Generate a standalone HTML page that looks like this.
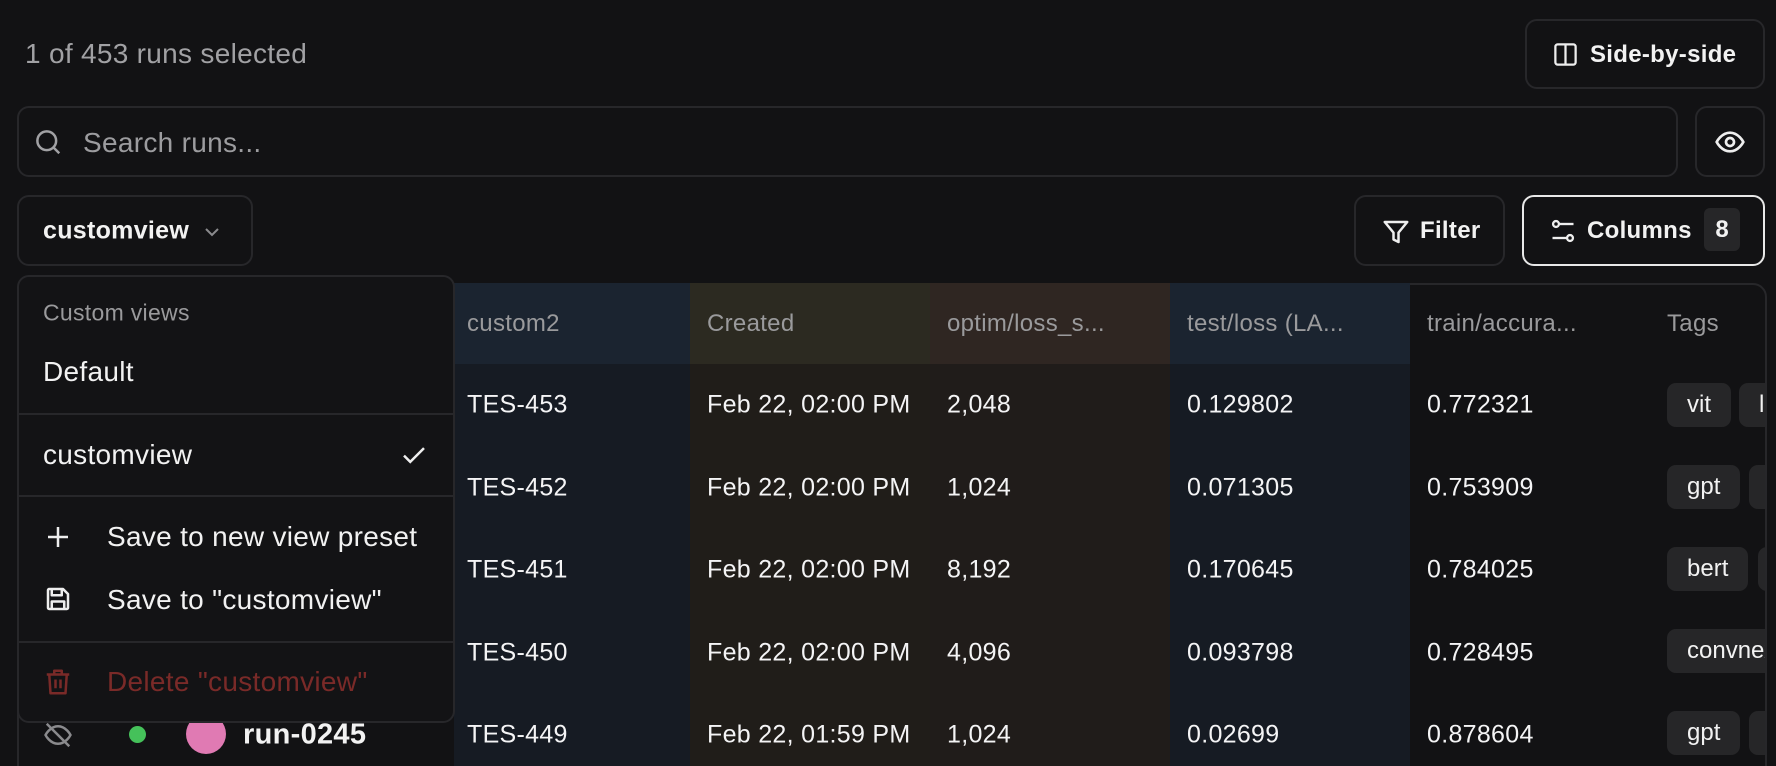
<!DOCTYPE html>
<html style="overflow:hidden;width:1776px;height:766px"><head><meta charset="utf-8"><style>
*{box-sizing:border-box;margin:0;padding:0}
body{width:1776px;height:766px;background:#121214;font-family:"Liberation Sans",sans-serif;color:#f2f2f2;position:relative;overflow:hidden}
#w{position:absolute;left:0;top:0;width:1776px;height:766px;overflow:hidden}
.a{position:absolute}
.box{position:absolute;border:2px solid #27272a;border-radius:12px}
.t{position:absolute;white-space:nowrap;transform:translateY(-50%);letter-spacing:0.3px}
.col{position:absolute;top:283px;height:483px}
.hd{position:absolute;top:0;left:0;right:0;height:81px}
.h{color:#9a9a9c;font-size:24px}
.c{font-size:25px;color:#f4f4f5}
.chip{position:absolute;height:44px;background:#262628;border-radius:9px;font-size:24px;line-height:44px;padding:0 20px;color:#f2f2f2}
svg{position:absolute}
</style></head><body><div id="w">
<div class="t" style="left:25px;top:54px;font-size:28px;color:#a1a1a4">1 of 453 runs selected</div>
<div class="box" style="left:1525px;top:19px;width:240px;height:70px"></div>
<svg style="left:1552px;top:41px" width="27" height="27" viewBox="0 0 24 24" fill="none" stroke="#eee" stroke-width="2"><rect x="3" y="3" width="18" height="18" rx="2"/><path d="M12 3v18"/></svg>
<div class="t" style="left:1590px;top:55px;font-size:24px;font-weight:bold">Side-by-side</div>

<div class="box" style="left:17px;top:106px;width:1661px;height:71px"></div>
<svg style="left:33px;top:127px" width="30" height="30" viewBox="0 0 24 24" fill="none" stroke="#a1a1a4" stroke-width="2"><circle cx="11" cy="11" r="7.5"/><path d="M16.5 16.5L21 21"/></svg>
<div class="t" style="left:83px;top:143px;font-size:28px;color:#9c9c9f">Search runs...</div>
<div class="box" style="left:1695px;top:106px;width:70px;height:71px"></div>
<svg style="left:1714px;top:126px" width="32" height="32" viewBox="0 0 24 24" fill="none" stroke="#eee" stroke-width="2"><path d="M2 12s3.5-7 10-7 10 7 10 7-3.5 7-10 7S2 12 2 12z"/><circle cx="12" cy="12" r="3"/></svg>

<div class="box" style="left:1354px;top:195px;width:151px;height:71px"></div>
<svg style="left:1381px;top:217px" width="30" height="30" viewBox="0 0 24 24" fill="none" stroke="#eee" stroke-width="2" stroke-linejoin="round"><path d="M3 4h18l-7 8.5V20l-4-2v-5.5z"/></svg>
<div class="t" style="left:1420px;top:231px;font-size:24px;font-weight:bold">Filter</div>
<div class="box" style="left:1522px;top:195px;width:243px;height:71px;border-color:#e8e8e8"></div>
<svg style="left:1549px;top:217px" width="28" height="28" viewBox="0 0 24 24" fill="none" stroke="#eee" stroke-width="2"><circle cx="6" cy="6" r="2.5"/><path d="M8.5 6H21"/><circle cx="18" cy="18" r="2.5"/><path d="M3 18h12.5"/></svg>
<div class="t" style="left:1587px;top:231px;font-size:24px;font-weight:bold">Columns</div>
<div class="a" style="left:1704px;top:208px;width:36px;height:43px;background:#262628;border-radius:6px;font-size:24px;font-weight:bold;line-height:43px;text-align:center">8</div>

<!-- table -->
<div class="box" style="left:17px;top:283px;width:1750px;height:510px;border-radius:14px"></div>
<div class="col" style="left:454px;width:236px;background:#161b23"><div class="hd" style="background:#1b2430"></div></div>
<div class="col" style="left:690px;width:240px;background:#201d19"><div class="hd" style="background:#2c2a21"></div></div>
<div class="col" style="left:930px;width:240px;background:#201c1a"><div class="hd" style="background:#2f2622"></div></div>
<div class="col" style="left:1170px;width:240px;background:#161b23"><div class="hd" style="background:#1b2430"></div></div>

<div class="t h" style="left:467px;top:324px">custom2</div>
<div class="t h" style="left:707px;top:324px">Created</div>
<div class="t h" style="left:947px;top:324px">optim/loss_s...</div>
<div class="t h" style="left:1187px;top:324px">test/loss (LA...</div>
<div class="t h" style="left:1427px;top:324px">train/accura...</div>
<div class="t h" style="left:1667px;top:324px">Tags</div>

<div class="t c" style="left:467px;top:405px">TES-453</div><div class="t c" style="left:707px;top:405px">Feb 22, 02:00 PM</div><div class="t c" style="left:947px;top:405px">2,048</div><div class="t c" style="left:1187px;top:405px">0.129802</div><div class="t c" style="left:1427px;top:405px">0.772321</div>
<div class="t c" style="left:467px;top:488px">TES-452</div><div class="t c" style="left:707px;top:488px">Feb 22, 02:00 PM</div><div class="t c" style="left:947px;top:488px">1,024</div><div class="t c" style="left:1187px;top:488px">0.071305</div><div class="t c" style="left:1427px;top:488px">0.753909</div>
<div class="t c" style="left:467px;top:570px">TES-451</div><div class="t c" style="left:707px;top:570px">Feb 22, 02:00 PM</div><div class="t c" style="left:947px;top:570px">8,192</div><div class="t c" style="left:1187px;top:570px">0.170645</div><div class="t c" style="left:1427px;top:570px">0.784025</div>
<div class="t c" style="left:467px;top:653px">TES-450</div><div class="t c" style="left:707px;top:653px">Feb 22, 02:00 PM</div><div class="t c" style="left:947px;top:653px">4,096</div><div class="t c" style="left:1187px;top:653px">0.093798</div><div class="t c" style="left:1427px;top:653px">0.728495</div>
<div class="t c" style="left:467px;top:735px">TES-449</div><div class="t c" style="left:707px;top:735px">Feb 22, 01:59 PM</div><div class="t c" style="left:947px;top:735px">1,024</div><div class="t c" style="left:1187px;top:735px">0.02699</div><div class="t c" style="left:1427px;top:735px">0.878604</div>

<div class="a" style="left:1650px;top:370px;width:115px;height:396px;overflow:hidden">
<div class="chip" style="left:17px;top:13px">vit</div><div class="chip" style="left:89px;top:13px">l</div>
<div class="chip" style="left:17px;top:95px">gpt</div><div class="chip" style="left:99px;top:95px">&nbsp;</div>
<div class="chip" style="left:17px;top:177px">bert</div><div class="chip" style="left:108px;top:177px">&nbsp;</div>
<div class="chip" style="left:17px;top:259px">convnext</div>
<div class="chip" style="left:17px;top:341px">gpt</div><div class="chip" style="left:99px;top:341px">&nbsp;</div>
</div>

<!-- run row -->
<svg style="left:43px;top:720px" width="30" height="30" viewBox="0 0 24 24" fill="none" stroke="#8a8a8d" stroke-width="2"><path d="M2 12s3.5-7 10-7 10 7 10 7-3.5 7-10 7S2 12 2 12z"/><path d="M3 3l18 18"/></svg>
<div class="a" style="left:129px;top:726px;width:17px;height:17px;border-radius:50%;background:#45c15a"></div>
<div class="a" style="left:186px;top:714px;width:40px;height:40px;border-radius:50%;background:#e07ab3"></div>
<div class="t" style="left:243px;top:735px;font-size:29px;font-weight:bold">run-0245</div>

<!-- customview button -->
<div class="box" style="left:17px;top:195px;width:236px;height:71px"></div>
<div class="t" style="left:43px;top:231px;font-size:25px;font-weight:bold">customview</div>
<svg style="left:200px;top:220px" width="24" height="24" viewBox="0 0 24 24" fill="none" stroke="#8a8a8d" stroke-width="2"><path d="M6 9l6 6 6-6"/></svg>

<!-- dropdown -->
<div class="a" style="left:17px;top:275px;width:438px;height:448px;background:#131315;border:2px solid #27272a;border-radius:12px"></div>
<div class="t" style="left:43px;top:313px;font-size:23px;color:#9a9a9c">Custom views</div>
<div class="t" style="left:43px;top:372px;font-size:28px">Default</div>
<div class="a" style="left:19px;top:413px;width:434px;height:2px;background:#27272a"></div>
<div class="t" style="left:43px;top:455px;font-size:28px">customview</div>
<svg style="left:398px;top:440px" width="32" height="30" viewBox="0 0 24 24" fill="none" stroke="#eee" stroke-width="2"><path d="M4 12.5l5 5L20 6.5"/></svg>
<div class="a" style="left:19px;top:495px;width:434px;height:2px;background:#27272a"></div>
<svg style="left:43px;top:522px" width="30" height="30" viewBox="0 0 24 24" fill="none" stroke="#eee" stroke-width="2"><path d="M12 4v16M4 12h16"/></svg>
<div class="t" style="left:107px;top:537px;font-size:28px">Save to new view preset</div>
<svg style="left:43px;top:584px" width="30" height="30" viewBox="0 0 24 24" fill="none" stroke="#eee" stroke-width="2" stroke-linejoin="round"><path d="M4 5a1 1 0 0 1 1-1h11l4 4v11a1 1 0 0 1-1 1H5a1 1 0 0 1-1-1z"/><path d="M7 4v5h8V4M7 20v-6h10v6"/></svg>
<div class="t" style="left:107px;top:600px;font-size:28px">Save to "customview"</div>
<div class="a" style="left:19px;top:641px;width:434px;height:2px;background:#27272a"></div>
<svg style="left:43px;top:667px" width="30" height="30" viewBox="0 0 24 24" fill="none" stroke="#7a2a28" stroke-width="2" stroke-linejoin="round"><path d="M3 6h18M9 6V3h6v3M5 6l1 15h12l1-15M10 10v7M14 10v7"/></svg>
<div class="t" style="left:107px;top:682px;font-size:28px;color:#7a2a28">Delete "customview"</div>
</div></body></html>
